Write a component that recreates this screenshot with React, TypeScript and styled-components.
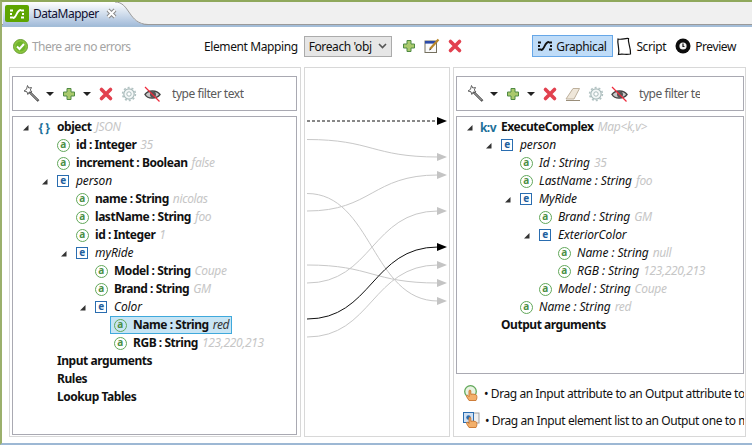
import React from "react";
import styled, { createGlobalStyle } from "styled-components";

const GlobalStyle = createGlobalStyle`
  html, body {
    margin: 0;
    padding: 0;
    background: #fff;
  }
  * {
    box-sizing: border-box;
  }
  svg {
    flex: none;
  }
`;

const Page = styled.div`
  width: 752px;
  height: 445px;
  overflow: hidden;
  display: flex;
  flex-direction: column;
  background: #fff;
  border-top: 2px solid #8fa85c;
  border-left: 2px solid #9bb06c;
  border-bottom: 2px solid #9db8d4;
  font-family: "Noto Sans", "Open Sans", sans-serif;
  font-size: 12px;
  letter-spacing: -0.4px;
  color: #111;
`;

const TabBar = styled.div`
  position: relative;
  flex: none;
  height: 25px;
  display: flex;
  align-items: center;
  background: #f0f0f0;
  border-bottom: 2px solid #a3bdd8;
  box-shadow: inset 0 -1px 0 #9a9a9a;
`;

const TabShape = styled.svg`
  position: absolute;
  left: 0;
  top: 0;
`;

const TabContent = styled.div`
  position: relative;
  display: flex;
  align-items: center;
  padding-left: 3px;
`;

const TabIcon = styled.span`
  width: 24px;
  height: 17px;
  display: flex;
  align-items: center;
  justify-content: center;
  border-radius: 2px;
  background: #5ea500;
`;

const TabTitle = styled.span`
  margin-left: 4px;
  letter-spacing: -0.5px;
  color: #101030;
`;

const CloseGlyph = styled.svg`
  margin-left: 7px;
`;

const Toolbar = styled.div`
  flex: none;
  height: 38px;
  display: flex;
  align-items: center;
  padding: 0 10px 0 11px;
`;

const StatusGroup = styled.div`
  width: 191px;
  display: flex;
  align-items: center;
  gap: 4px;
  letter-spacing: -0.55px;
  color: #a4a4a4;
`;

const MappingGroup = styled.div`
  display: flex;
  align-items: center;
  gap: 7px;
`;

const MappingLabel = styled.span`
  margin-right: -1px;
`;

const SelectBox = styled.div`
  width: 88px;
  height: 21px;
  display: flex;
  align-items: center;
  justify-content: space-between;
  margin-right: 2px;
  padding: 0 4px;
  background: #e6e6e6;
  border: 1px solid #ababab;
`;

const ViewGroup = styled.div`
  margin-left: auto;
  display: flex;
  align-items: center;
`;

const ViewButton = styled.div<{ $active?: boolean }>`
  height: 22px;
  display: flex;
  align-items: center;
  gap: 4px;
  padding: ${(p) => (p.$active ? "0 6px 0 5px" : "0 5px 0 2px")};
  background: ${(p) => (p.$active ? "#bfdcf8" : "transparent")};
  border: 1px solid ${(p) => (p.$active ? "#66a7e8" : "transparent")};
`;

const Panels = styled.div`
  flex: 1;
  min-height: 0;
  display: flex;
  padding: 2px 0 6px 7px;
`;

const Panel = styled.div<{ $tight?: boolean }>`
  width: ${(p) => (p.$tight ? "293px" : "292px")};
  display: flex;
  flex-direction: column;
  padding: 8px ${(p) => (p.$tight ? "1px" : "3px")} 1px 2px;
  border: 1px solid #d8d8d8;
`;

const MiddlePanel = styled.div`
  width: 146px;
  margin: 0 3px;
  border: 1px solid #d8d8d8;
`;

const FilterBar = styled.div`
  flex: none;
  height: 35px;
  display: flex;
  align-items: center;
  padding-left: 10px;
  border: 1px solid #a9a9b2;
`;

const FilterIcons = styled.div`
  display: flex;
  align-items: center;
  gap: 7px;
`;

const DropArrow = styled.span`
  width: 0;
  height: 0;
  margin-left: -1px;
  border-left: 4px solid transparent;
  border-right: 4px solid transparent;
  border-top: 4px solid #222;
`;

const FilterText = styled.span<{ $width?: number }>`
  margin-left: 11px;
  color: #5a5a5a;
  letter-spacing: -0.45px;
  white-space: nowrap;
  overflow: hidden;
  ${(p) => (p.$width ? `width: ${p.$width}px;` : "")}
`;

const TreeBox = styled.div<{ $grow?: boolean; $height?: number }>`
  margin-top: 5px;
  padding-top: 1px;
  border: 1px solid #a9a9b2;
  ${(p) => (p.$grow ? "flex: 1;" : "")}
  ${(p) => (p.$height ? `flex: none; height: ${p.$height}px;` : "")}
`;

const Row = styled.div<{ $level: number }>`
  height: 18px;
  display: flex;
  align-items: center;
  padding-left: ${(p) => 5 + p.$level * 19}px;
`;

const Twisty = styled.span`
  flex: none;
  width: 14px;
  display: flex;
  justify-content: center;
`;

const Cell = styled.div<{ $selected?: boolean }>`
  height: 18px;
  display: flex;
  align-items: center;
  margin-left: 2px;
  padding: 0 2px 0 1px;
  border: 1px solid ${(p) => (p.$selected ? "#3fa9dc" : "transparent")};
  background: ${(p) => (p.$selected ? "#c8e5f4" : "transparent")};
`;

const IconSlot = styled.span`
  flex: none;
  width: 16px;
  height: 16px;
  margin-right: 5px;
  display: flex;
  align-items: center;
  justify-content: center;
`;

const AttrBadge = styled.span`
  width: 13px;
  height: 13px;
  display: flex;
  align-items: center;
  justify-content: center;
  border: 1.5px solid #62a85a;
  border-radius: 50%;
  color: #4c8f46;
  font-size: 10px;
  font-weight: 700;
  line-height: 1;
  padding-bottom: 2px;
`;

const ElemBadge = styled.span`
  width: 12px;
  height: 12px;
  display: flex;
  align-items: center;
  justify-content: center;
  border: 1px solid #2a6db0;
  color: #1f5f9e;
  font-size: 10px;
  font-weight: 700;
  line-height: 1;
  padding-bottom: 2px;
`;

const RootBadge = styled.span`
  color: #1d7099;
  font-size: 12px;
  font-weight: 700;
  white-space: nowrap;
  letter-spacing: -0.5px;
`;

const Label = styled.span<{ $kind: "bold" | "italic" }>`
  padding-bottom: 2px;
  white-space: nowrap;
  font-weight: ${(p) => (p.$kind === "italic" ? 400 : 700)};
  font-style: ${(p) => (p.$kind === "bold" ? "normal" : "italic")};
  letter-spacing: ${(p) => (p.$kind === "italic" ? "-0.1px" : "-0.45px")};
`;

const Value = styled.span<{ $dark?: boolean }>`
  margin-left: 4px;
  padding-bottom: 2px;
  white-space: nowrap;
  font-style: italic;
  letter-spacing: -0.35px;
  color: ${(p) => (p.$dark ? "#333" : "#c6c6c6")};
`;

const Hints = styled.div`
  flex: 1;
  padding: 6px 0 0 7px;
  overflow: hidden;
`;

const HintRow = styled.div`
  height: 27px;
  display: flex;
  align-items: center;
  white-space: nowrap;
  gap: 5px;
`;

const Arrow = () => (
  <svg width="7" height="7" viewBox="0 0 7 7">
    <path d="M6.5 1V6.5H1Z" fill="#333" />
  </svg>
);

const AddIcon = () => (
  <svg width="16" height="16" viewBox="0 0 16 16">
    <path d="M6 2.5h4v3.5h3.5v4H10v3.5H6V10H2.5V6H6Z" fill="#a9c96c" stroke="#4f8a44" />
  </svg>
);

const DeleteIcon = () => (
  <svg width="16" height="16" viewBox="0 0 16 16">
    <path d="M3.5 3.5 12.5 12.5M12.5 3.5 3.5 12.5" stroke="#e2414f" strokeWidth="3.6" strokeLinecap="round" />
  </svg>
);

const WandIcon = () => (
  <svg width="17" height="17" viewBox="0 0 17 17">
    <path d="M6.5 7 15.5 16" stroke="#333" strokeWidth="2.4" />
    <path d="M7 7.5 15 15.5" stroke="#fff" strokeWidth="0.8" />
    <path d="M4.5 0.5 5.8 3 8.5 2.5 7.3 5 9 7 6.2 7 4.8 9.5 4 6.8 1 6 3.5 4.3Z" fill="#fff" stroke="#555" strokeWidth="0.9" />
  </svg>
);

const GearIcon = () => (
  <svg width="16" height="16" viewBox="0 0 16 16">
    <circle cx="8" cy="8" r="5.2" fill="#f4f7f7" stroke="#a8baba" strokeWidth="1.2" />
    <circle cx="8" cy="8" r="6.4" fill="none" stroke="#b2c2c2" strokeWidth="1.6" strokeDasharray="2 2" />
    <circle cx="8" cy="8" r="2.2" fill="#fff" stroke="#a8baba" />
  </svg>
);

const HiddenEyeIcon = () => (
  <svg width="17" height="16" viewBox="0 0 17 16">
    <path d="M1 8.5C4 4 12.5 3.5 16 8.5 12.5 13 4 13.5 1 8.5Z" fill="#c8c8c8" stroke="#444" strokeWidth="1.4" />
    <circle cx="9" cy="8.5" r="3" fill="#555" />
    <path d="M1 1 15.5 15.5" stroke="#ef2b3c" strokeWidth="1.3" />
  </svg>
);

const EraserIcon = () => (
  <svg width="16" height="16" viewBox="0 0 16 16">
    <path d="M1 13 8 2.5H14.5L9 13Z" fill="#efe7da" stroke="#bdb09c" />
    <path d="M1 14.5H15" stroke="#9a8e7a" />
  </svg>
);

const EditIcon = () => (
  <svg width="16" height="16" viewBox="0 0 16 16">
    <rect x="1" y="3" width="11.5" height="11.5" fill="#fafafa" stroke="#75705f" />
    <rect x="1" y="3" width="11.5" height="2.6" fill="#2a49a8" />
    <path d="M6 11 14.5 1.5" stroke="#b8862b" strokeWidth="2.2" />
    <path d="M5 12.5 6 10.5 7 11.5Z" fill="#222" />
  </svg>
);

const MappingGlyph = ({ color }: { color: string }) => (
  <svg width="14" height="12" viewBox="0 0 14 12">
    <path d="M0 2.5H3M0 6H2M0 9.5H3M11 2.5H14M12 6H14M11 9.5H14" stroke={color} strokeWidth="2" />
    <path d="M3 10C7 10 6 2 11 2" stroke={color} strokeWidth="1.8" fill="none" />
  </svg>
);

const ScriptIcon = () => (
  <svg width="16" height="19" viewBox="0 0 16 19">
    <path d="M2 2C6 3 9 1 12.5 1.5 11.5 6 15 10 14.5 17 10 18 6 16.5 2.5 17.5 4 12 1 7 2 2Z" fill="#fff" stroke="#111" strokeWidth="1.2" />
  </svg>
);

const PreviewIcon = () => (
  <svg width="16" height="16" viewBox="0 0 16 16">
    <circle cx="8" cy="8" r="7.5" fill="#0c0c0c" />
    <circle cx="8" cy="8" r="3.6" fill="#f2f2f2" />
    <path d="M8 5.5V8.5H9.5" stroke="#111" strokeWidth="1.2" fill="none" />
  </svg>
);

const StatusIcon = () => (
  <svg width="15" height="15" viewBox="0 0 15 15">
    <circle cx="7.5" cy="7.5" r="7" fill="#8cc63f" stroke="#6a9f35" />
    <circle cx="7.5" cy="7.5" r="5" fill="#6fb52c" />
    <path d="M4 7.5 6.5 10 11 5" stroke="#fff" strokeWidth="2" fill="none" />
  </svg>
);

const Hand = () => (
  <path
    d="M6 15.5 3.5 11.5C3 10.5 4.2 9.8 5 10.6L6 11.6V6C6 4.8 7.8 4.8 7.8 6V9.3C9 8.8 12.8 9.2 13.5 10.2 14.2 11.5 14 14 13 15.5Z"
    fill="#f3b06b"
    stroke="#c8742c"
    strokeWidth="0.9"
  />
);

const DragAttrIcon = () => (
  <svg width="16" height="17" viewBox="0 0 16 17">
    <circle cx="7.5" cy="6.5" r="5.8" fill="#e8f3e2" stroke="#62a85a" strokeWidth="1.3" />
    <Hand />
  </svg>
);

const DragListIcon = () => (
  <svg width="17" height="17" viewBox="0 0 17 17">
    <rect x="9" y="1" width="7" height="10" fill="#eee" stroke="#a0a0a0" />
    <rect x="0.5" y="0.5" width="10" height="10" fill="#cfe0f3" stroke="#2a6db0" />
    <circle cx="5.5" cy="5.5" r="2.2" fill="#2a6db0" />
    <Hand />
  </svg>
);

type Node = {
  level: number;
  name: string;
  value?: string;
  darkValue?: boolean;
  kind: "bold" | "italic";
  icon?: "attr" | "elem" | "braces" | "map";
  open?: boolean;
  selected?: boolean;
};

const inputTree: Node[] = [
  { level: 0, name: "object", value: "JSON", kind: "bold", icon: "braces", open: true },
  { level: 1, name: "id : Integer", value: "35", kind: "bold", icon: "attr" },
  { level: 1, name: "increment : Boolean", value: "false", kind: "bold", icon: "attr" },
  { level: 1, name: "person", kind: "italic", icon: "elem", open: true },
  { level: 2, name: "name : String", value: "nicolas", kind: "bold", icon: "attr" },
  { level: 2, name: "lastName : String", value: "foo", kind: "bold", icon: "attr" },
  { level: 2, name: "id : Integer", value: "1", kind: "bold", icon: "attr" },
  { level: 2, name: "myRide", kind: "italic", icon: "elem", open: true },
  { level: 3, name: "Model : String", value: "Coupe", kind: "bold", icon: "attr" },
  { level: 3, name: "Brand : String", value: "GM", kind: "bold", icon: "attr" },
  { level: 3, name: "Color", kind: "italic", icon: "elem", open: true },
  { level: 4, name: "Name : String", value: "red", darkValue: true, kind: "bold", icon: "attr", selected: true },
  { level: 4, name: "RGB : String", value: "123,220,213", kind: "bold", icon: "attr" },
  { level: 0, name: "Input arguments", kind: "bold" },
  { level: 0, name: "Rules", kind: "bold" },
  { level: 0, name: "Lookup Tables", kind: "bold" },
];

const outputTree: Node[] = [
  { level: 0, name: "ExecuteComplex", value: "Map<k,v>", kind: "bold", icon: "map", open: true },
  { level: 1, name: "person", kind: "italic", icon: "elem", open: true },
  { level: 2, name: "Id : String", value: "35", kind: "italic", icon: "attr" },
  { level: 2, name: "LastName : String", value: "foo", kind: "italic", icon: "attr" },
  { level: 2, name: "MyRide", kind: "italic", icon: "elem", open: true },
  { level: 3, name: "Brand : String", value: "GM", kind: "italic", icon: "attr" },
  { level: 3, name: "ExteriorColor", kind: "italic", icon: "elem", open: true },
  { level: 4, name: "Name : String", value: "null", kind: "italic", icon: "attr" },
  { level: 4, name: "RGB : String", value: "123,220,213", kind: "italic", icon: "attr" },
  { level: 3, name: "Model : String", value: "Coupe", kind: "italic", icon: "attr" },
  { level: 2, name: "Name : String", value: "red", kind: "italic", icon: "attr" },
  { level: 0, name: "Output arguments", kind: "bold" },
];

const nodeIcon = (icon: Node["icon"]) => {
  if (icon === "attr") return <AttrBadge>a</AttrBadge>;
  if (icon === "elem") return <ElemBadge>e</ElemBadge>;
  if (icon === "braces") return <RootBadge>{"{ }"}</RootBadge>;
  if (icon === "map") return <RootBadge>k:v</RootBadge>;
  return null;
};

const Tree = ({ nodes }: { nodes: Node[] }) => (
  <>
    {nodes.map((n, i) => (
      <Row key={i} $level={n.level}>
        <Twisty>{n.open && <Arrow />}</Twisty>
        <Cell $selected={n.selected}>
          <IconSlot>{nodeIcon(n.icon)}</IconSlot>
          <Label $kind={n.kind}>{n.name}</Label>
          {n.value && <Value $dark={n.darkValue}>{n.value}</Value>}
        </Cell>
      </Row>
    ))}
  </>
);

const links = [
  { from: 139.5, to: 157 },
  { from: 211, to: 175 },
  { from: 193.5, to: 301 },
  { from: 283, to: 211 },
  { from: 265, to: 283 },
  { from: 337, to: 265 },
];

const Connectors = () => (
  <svg width="144" height="369" viewBox="305 68 144 369">
    {links.map((l) => (
      <g key={l.from}>
        <path d={`M307 ${l.from}C372 ${l.from} 372 ${l.to} 438 ${l.to}`} fill="none" stroke="#c8c8c8" />
        <path d={`M437 ${l.to - 4}L447 ${l.to}L437 ${l.to + 4}Z`} fill="#c4c4c4" />
      </g>
    ))}
    <path d="M307 319C372 319 372 247 438 247" fill="none" stroke="#111" />
    <path d="M437 243L447 247L437 251Z" fill="#000" />
    <path d="M307 121H438" stroke="#111" strokeDasharray="3 2" />
    <path d="M437 117L447 121L437 125Z" fill="#000" />
  </svg>
);

const App = () => (
  <Page>
    <GlobalStyle />
    <TabBar>
      <TabShape width="160" height="23" viewBox="0 0 160 23">
        <defs>
          <linearGradient id="tabFill" x1="0" y1="0" x2="0" y2="1">
            <stop offset="0" stopColor="#ffffff" />
            <stop offset="1" stopColor="#a6bedb" />
          </linearGradient>
        </defs>
        <path d="M1 23V3Q1 0 4 0H113C128 0 126 22 146 23Z" fill="url(#tabFill)" />
        <path d="M113 0C128 0 126 22 146 22.5" fill="none" stroke="#9a9a9a" />
      </TabShape>
      <TabContent>
        <TabIcon>
          <MappingGlyph color="#fff" />
        </TabIcon>
        <TabTitle>DataMapper</TabTitle>
        <CloseGlyph width="11" height="11" viewBox="0 0 11 11">
          <path d="M2 2 9 9M9 2 2 9" stroke="#8a8a8a" strokeWidth="4" />
          <path d="M2 2 9 9M9 2 2 9" stroke="#fff" strokeWidth="2" />
        </CloseGlyph>
      </TabContent>
    </TabBar>
    <Toolbar>
      <StatusGroup>
        <StatusIcon />
        There are no errors
      </StatusGroup>
      <MappingGroup>
        <MappingLabel>Element Mapping</MappingLabel>
        <SelectBox>
          Foreach 'obj
          <svg width="9" height="6" viewBox="0 0 9 6">
            <path d="M1 1 4.5 4.5 8 1" fill="none" stroke="#555" strokeWidth="1.6" />
          </svg>
        </SelectBox>
        <AddIcon />
        <EditIcon />
        <DeleteIcon />
      </MappingGroup>
      <ViewGroup>
        <ViewButton $active>
          <MappingGlyph color="#111" />
          Graphical
        </ViewButton>
        <ViewButton>
          <ScriptIcon />
          Script
        </ViewButton>
        <ViewButton>
          <PreviewIcon />
          Preview
        </ViewButton>
      </ViewGroup>
    </Toolbar>
    <Panels>
      <Panel>
        <FilterBar>
          <FilterIcons>
            <WandIcon />
            <DropArrow />
            <AddIcon />
            <DropArrow />
            <DeleteIcon />
            <GearIcon />
            <HiddenEyeIcon />
          </FilterIcons>
          <FilterText>type filter text</FilterText>
        </FilterBar>
        <TreeBox $grow>
          <Tree nodes={inputTree} />
        </TreeBox>
      </Panel>
      <MiddlePanel>
        <Connectors />
      </MiddlePanel>
      <Panel $tight>
        <FilterBar>
          <FilterIcons>
            <WandIcon />
            <DropArrow />
            <AddIcon />
            <DropArrow />
            <DeleteIcon />
            <EraserIcon />
            <GearIcon />
            <HiddenEyeIcon />
          </FilterIcons>
          <FilterText $width={61}>type filter text</FilterText>
        </FilterBar>
        <TreeBox $height={258}>
          <Tree nodes={outputTree} />
        </TreeBox>
        <Hints>
          <HintRow>
            <DragAttrIcon />
            <span>• Drag an Input attribute to an Output attribute to</span>
          </HintRow>
          <HintRow>
            <DragListIcon />
            <span>• Drag an Input element list to an Output one to m</span>
          </HintRow>
        </Hints>
      </Panel>
    </Panels>
  </Page>
);

export default App;
